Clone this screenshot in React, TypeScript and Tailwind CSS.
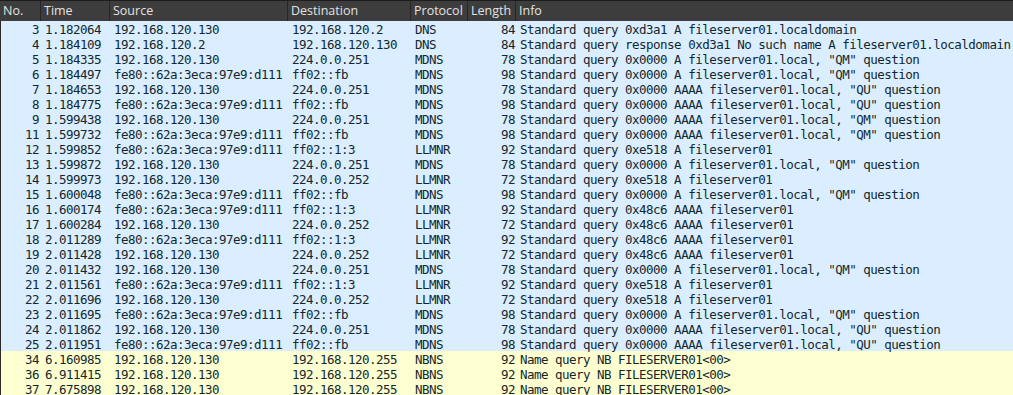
import React from "react";

type Row = [string, string, string, string, string, string, string];

const rows: Row[] = [
  ["3", "1.182064", "192.168.120.130", "192.168.120.2", "DNS", "84", "Standard query 0xd3a1 A fileserver01.localdomain"],
  ["4", "1.184109", "192.168.120.2", "192.168.120.130", "DNS", "84", "Standard query response 0xd3a1 No such name A fileserver01.localdomain"],
  ["5", "1.184335", "192.168.120.130", "224.0.0.251", "MDNS", "78", 'Standard query 0x0000 A fileserver01.local, "QM" question'],
  ["6", "1.184497", "fe80::62a:3eca:97e9:d111", "ff02::fb", "MDNS", "98", 'Standard query 0x0000 A fileserver01.local, "QM" question'],
  ["7", "1.184653", "192.168.120.130", "224.0.0.251", "MDNS", "78", 'Standard query 0x0000 AAAA fileserver01.local, "QU" question'],
  ["8", "1.184775", "fe80::62a:3eca:97e9:d111", "ff02::fb", "MDNS", "98", 'Standard query 0x0000 AAAA fileserver01.local, "QU" question'],
  ["9", "1.599438", "192.168.120.130", "224.0.0.251", "MDNS", "78", 'Standard query 0x0000 AAAA fileserver01.local, "QM" question'],
  ["11", "1.599732", "fe80::62a:3eca:97e9:d111", "ff02::fb", "MDNS", "98", 'Standard query 0x0000 AAAA fileserver01.local, "QM" question'],
  ["12", "1.599852", "fe80::62a:3eca:97e9:d111", "ff02::1:3", "LLMNR", "92", "Standard query 0xe518 A fileserver01"],
  ["13", "1.599872", "192.168.120.130", "224.0.0.251", "MDNS", "78", 'Standard query 0x0000 A fileserver01.local, "QM" question'],
  ["14", "1.599973", "192.168.120.130", "224.0.0.252", "LLMNR", "72", "Standard query 0xe518 A fileserver01"],
  ["15", "1.600048", "fe80::62a:3eca:97e9:d111", "ff02::fb", "MDNS", "98", 'Standard query 0x0000 A fileserver01.local, "QM" question'],
  ["16", "1.600174", "fe80::62a:3eca:97e9:d111", "ff02::1:3", "LLMNR", "92", "Standard query 0x48c6 AAAA fileserver01"],
  ["17", "1.600284", "192.168.120.130", "224.0.0.252", "LLMNR", "72", "Standard query 0x48c6 AAAA fileserver01"],
  ["18", "2.011289", "fe80::62a:3eca:97e9:d111", "ff02::1:3", "LLMNR", "92", "Standard query 0x48c6 AAAA fileserver01"],
  ["19", "2.011428", "192.168.120.130", "224.0.0.252", "LLMNR", "72", "Standard query 0x48c6 AAAA fileserver01"],
  ["20", "2.011432", "192.168.120.130", "224.0.0.251", "MDNS", "78", 'Standard query 0x0000 A fileserver01.local, "QM" question'],
  ["21", "2.011561", "fe80::62a:3eca:97e9:d111", "ff02::1:3", "LLMNR", "92", "Standard query 0xe518 A fileserver01"],
  ["22", "2.011696", "192.168.120.130", "224.0.0.252", "LLMNR", "72", "Standard query 0xe518 A fileserver01"],
  ["23", "2.011695", "fe80::62a:3eca:97e9:d111", "ff02::fb", "MDNS", "98", 'Standard query 0x0000 A fileserver01.local, "QM" question'],
  ["24", "2.011862", "192.168.120.130", "224.0.0.251", "MDNS", "78", 'Standard query 0x0000 AAAA fileserver01.local, "QU" question'],
  ["25", "2.011951", "fe80::62a:3eca:97e9:d111", "ff02::fb", "MDNS", "98", 'Standard query 0x0000 AAAA fileserver01.local, "QU" question'],
  ["34", "6.160985", "192.168.120.130", "192.168.120.255", "NBNS", "92", "Name query NB FILESERVER01<00>"],
  ["36", "6.911415", "192.168.120.130", "192.168.120.255", "NBNS", "92", "Name query NB FILESERVER01<00>"],
  ["37", "7.675898", "192.168.120.130", "192.168.120.255", "NBNS", "92", "Name query NB FILESERVER01<00>"],
];

const headers = ["No.", "Time", "Source", "Destination", "Protocol", "Length", "Info"];
const grid = "grid grid-cols-[41px_69px_178px_123px_57px_48px_1fr]";

export default function App() {
  return (
    <div className="w-[1013px] h-[395px] overflow-hidden bg-white">
      <div
        className={`${grid} h-[21px] bg-[#3d3d3d] border-t border-[#1c1c1c] text-[#e2e2e2] text-[12.5px]`}
        style={{ fontFamily: '"Open Sans", "Noto Sans", sans-serif' }}
      >
        {headers.map((h, i) => (
          <div
            key={h}
            className={`h-full flex items-center pl-[3px] pt-[1px] whitespace-nowrap overflow-hidden ${
              i < headers.length - 1 ? "border-r border-[#262626]" : ""
            }`}
          >
            {h}
          </div>
        ))}
      </div>
      <div
        className="border-l border-[#2a2a2a] text-[12.5px] tracking-[-0.52px] text-[#12272e]"
        style={{ fontFamily: '"DejaVu Sans Mono", monospace' }}
      >
        {rows.map((r) => {
          const yellow = r[4] === "NBNS";
          return (
            <div
              key={r[0]}
              className={`${grid} h-[15px] leading-[13px] pt-[2px] whitespace-nowrap ${
                yellow ? "bg-[#feffd0]" : "bg-[#daeeff]"
              }`}
            >
              <div className="text-right pr-[3px]">{r[0]}</div>
              <div className="pl-[3px]">{r[1]}</div>
              <div className="pl-[3px]">{r[2]}</div>
              <div className="pl-[3px]">{r[3]}</div>
              <div className="pl-[3px]">{r[4]}</div>
              <div className="text-right pr-[2px]">{r[5]}</div>
              <div className="pl-[3px]">{r[6]}</div>
            </div>
          );
        })}
      </div>
    </div>
  );
}
